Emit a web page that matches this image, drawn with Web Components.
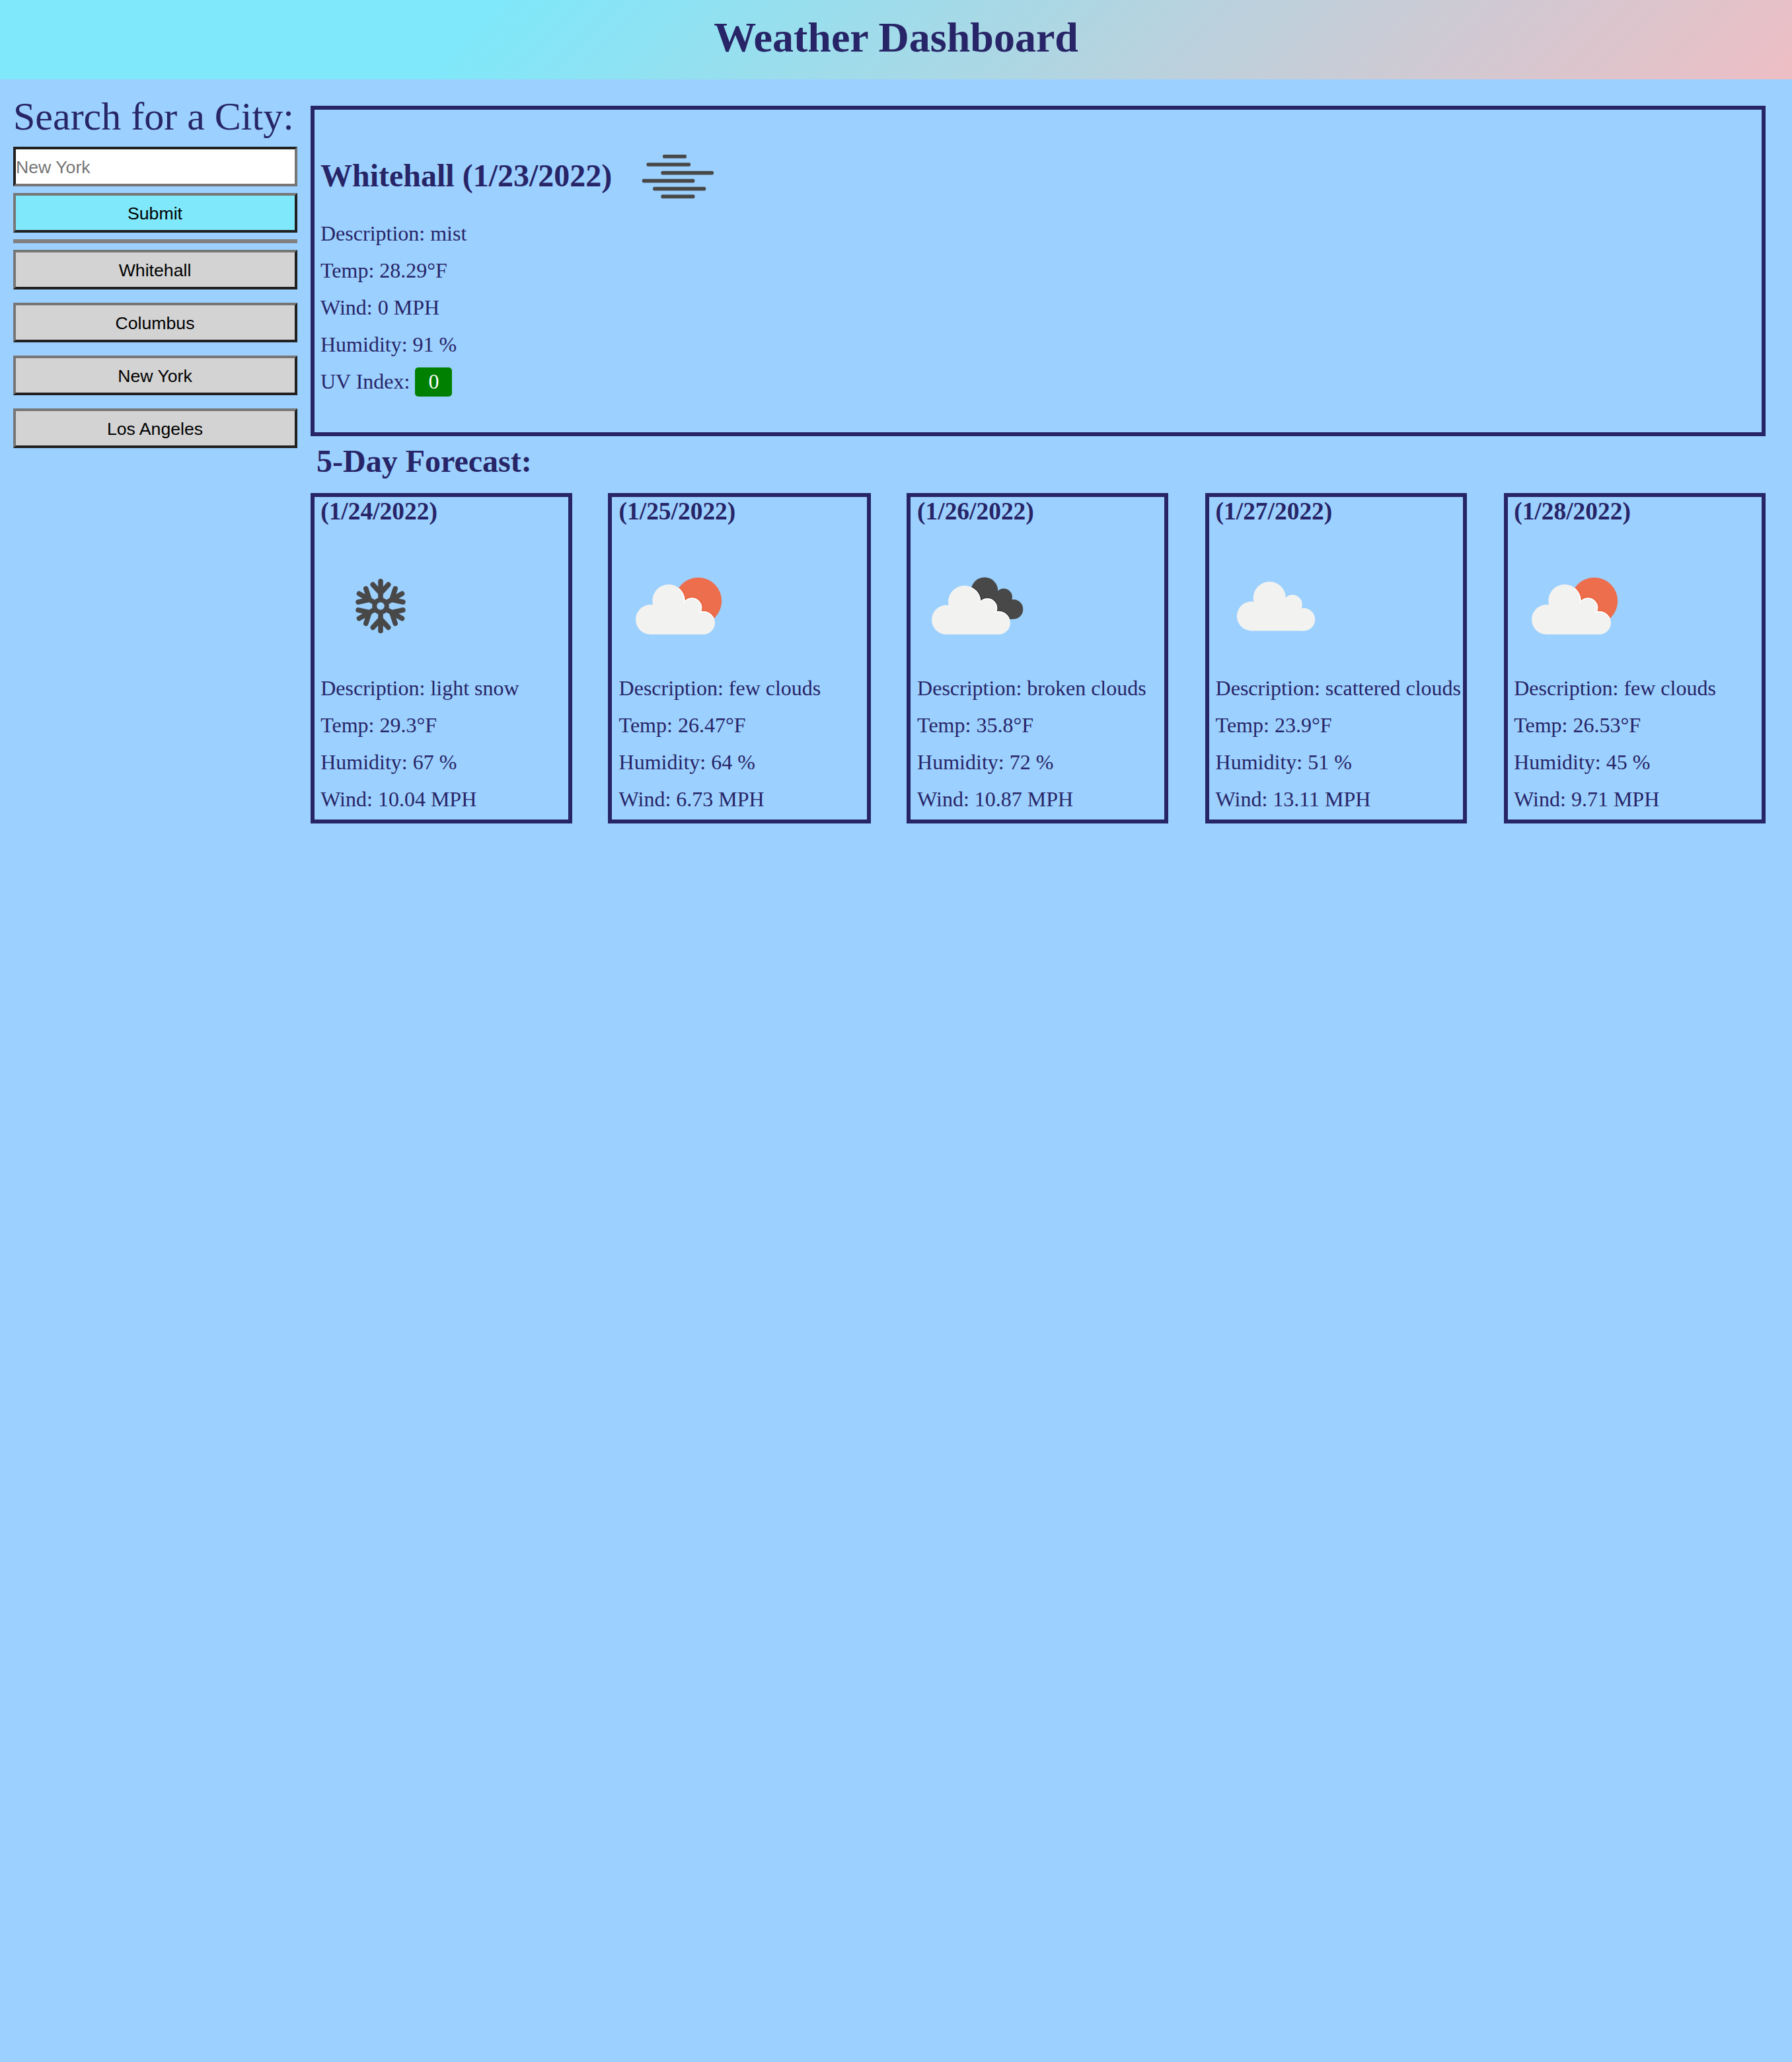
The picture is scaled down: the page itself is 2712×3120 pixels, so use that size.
<!DOCTYPE html>
<html lang="en">
<head>
<meta charset="utf-8">
<title>Weather Dashboard</title>
<style>
  html { background: #9cd0ff; }
  body { margin: 0; font-family: "Liberation Serif", "Times New Roman", serif; font-size: 32px; color: #272567; }
</style>
</head>
<body>
<weather-app></weather-app>
<script>
const make = (name, html, setup) => {
  const tpl = document.createElement('template');
  tpl.innerHTML = html;
  customElements.define(name, class extends HTMLElement {
    connectedCallback() {
      if (this.shadowRoot) return;
      const root = this.attachShadow({ mode: 'open' });
      root.append(tpl.content.cloneNode(true));
      if (setup) setup(this, root);
    }
  });
};

// A cloud is a list of [cx, cy, r] lobes (left, big, small, right) on a flat base.
const cloud = (lobes, fill, d = 0) => {
  const [l, b, s, r] = lobes;
  const base = l[1] + l[2] + d;
  return `<g fill="${fill}">` +
    lobes.map(([x, y, q]) => `<circle cx="${x}" cy="${y}" r="${q + d}"/>`).join('') +
    `<path d="M${l[0]} ${l[1]}L${b[0]} ${b[1]}L${s[0]} ${s[1]}L${r[0]} ${r[1]}V${base}H${l[0]}Z"/></g>`;
};
const layered = (lobes, clip, rim) =>
  `<g clip-path="url(#${clip})">${cloud(lobes, rim, 1.3)}</g>` + cloud(lobes, '#f2f2f0') +
  `<g clip-path="url(#${clip})">${cloud(lobes, '#fbffff')}${cloud(lobes, '#f2f2f0', -1.6)}</g>`;

const few = [[47.6,110.4,22.6],[75,82,24.7],[110.3,92.6,15],[127.4,115.4,17.6]];
const broken = [[43.2,110.8,22.2],[70.7,83.7,24.7],[105.3,93.3,15],[122.4,115.4,17.6]];
const scattered = [[53.1,105.3,22.2],[80.3,77.7,24.6],[115,87.7,14.7],[132,110.3,17.2]];
const sun = '<circle cx="119.7" cy="82.3" r="35.5"/>';
const darkCloud = '<circle cx="101" cy="66.8" r="20.3"/><circle cx="130" cy="76.6" r="13"/><circle cx="144.4" cy="94.9" r="14.9"/><path d="M101 66.8L130 76.6L144.4 94.9V109.8H100Z"/>';
const arm = '<path d="M0-12V-37.5M0-19.5L-11.7-32.4M0-19.5L11.7-32.4"/>';
const bars = [[67,36,59.7],[42.5,66.5,72],[64.4,79.6,84.6],[35.8,79.5,96.6],[52.2,80,108.6],[64.4,51,120.4]];

const icons = {
  snow: `<g transform="translate(89 90)" fill="none" stroke="#484848" stroke-width="7.6" stroke-linecap="round">
    <circle r="9.3" stroke-width="7"/>${[0,60,120,180,240,300].map(a => `<g transform="rotate(${a})">${arm}</g>`).join('')}</g>`,
  few: `<clipPath id="s">${sun}</clipPath><g fill="#ec6e4c">${sun}</g>` + layered(few, 's', '#ee5a30'),
  broken: `<clipPath id="d">${darkCloud}</clipPath><g fill="#484848">${darkCloud}</g>` + layered(broken, 'd', '#303032'),
  scattered: cloud(scattered, '#f2f2f0'),
  mist: '<g fill="#484848">' + bars.map(([x, w, y]) => `<rect x="${x}" y="${y - 2.8}" width="${w}" height="5.6" rx="2"/>`).join('') + '</g>'
};

make('weather-icon', `<style>
  :host { display: block; width: 180px; height: 180px; }
  svg { display: block; width: 100%; height: 100%; filter: blur(.6px); }
</style>`, (el, root) => {
  const box = el.getAttribute('box') || '0 0 180 180';
  root.innerHTML += `<svg viewBox="${box}" aria-hidden="true">${icons[el.getAttribute('kind')]}</svg>`;
});

make('app-header', `<style>
  :host { display: block; height: 120px; box-sizing: border-box; padding-top: 20px; text-align: center;
    background: linear-gradient(135deg, #7fe8fa 27%, #eebec4 100%); }
  h1 { margin: 0; font-size: 64px; line-height: 73px; }
</style><h1><slot></slot></h1>`);

make('city-button', `<style>
  :host { display: block; }
  button { display: block; width: 100%; height: 60px; box-sizing: border-box; margin: 0; padding: 12px 1px 10px 0;
    border: 4px solid; border-color: #767676 #212121 #212121 #767676; border-radius: 0;
    background: var(--fill, #d3d3d3); color: #000;
    font: 26.667px/30px "Liberation Sans", Arial, sans-serif; }
</style><button type="button"><slot></slot></button>`);

make('search-panel', `<style>
  :host { display: block; width: 430px; padding: 23px 0 0 20px; }
  label { display: block; font-size: 60px; line-height: 66px; white-space: nowrap; margin: 0 0 13px; }
  input { display: block; width: 430px; height: 60px; box-sizing: border-box; margin: 0 0 10px; padding: 2px 0 0;
    border: 4px solid; border-color: #212121 #767676 #767676 #212121; border-radius: 0; background: #fff;
    font: 26.667px/30px "Liberation Sans", Arial, sans-serif; }
  input::placeholder { color: #757575; opacity: 1; }
  .submit { --fill: #7fe8fa; }
  .rule { height: 6px; background: #808080; margin: 10px 0; }
  .history { display: flex; flex-direction: column; gap: 20px; }
</style>
<label for="city">Search for a City:</label>
<input id="city" type="text" placeholder="New York">
<city-button class="submit">Submit</city-button>
<div class="rule"></div>
<div class="history"><slot></slot></div>`);

make('current-weather', `<style>
  :host { display: block; height: 500px; box-sizing: border-box; border: 6px solid #272567; padding: 46px 10px 0 9px; }
  .top { display: flex; align-items: center; height: 110px; margin-bottom: 3px; }
  h2 { margin: 0 0 3px; width: 451px; font-size: 48px; line-height: 57px; white-space: nowrap; }
  weather-icon { height: 110px; }
  .facts { line-height: 56px; }
</style>
<div class="top"><h2><slot name="title"></slot></h2><weather-icon kind="mist" box="0 35 180 110"></weather-icon></div>
<div class="facts"><slot></slot></div>`);

make('weather-fact', `<style>:host { display: block; height: 56px; line-height: 56px; white-space: nowrap; }</style><slot></slot>`);

make('uv-badge', `<style>
  :host { display: inline; padding: 3px 20px 5px; border-radius: 5px; background: #008000; color: #fff; }
</style><slot></slot>`);

make('forecast-card', `<style>
  :host { display: block; width: var(--w, 396px); height: 500px; box-sizing: border-box; border: 6px solid #272567; }
  h3 { margin: 0 0 32px; font-size: 37.44px; line-height: 43px; padding-left: var(--inset, 9.2px); }
  weather-icon { margin: 0 0 6px 11px; }
  .facts { padding-left: var(--inset, 9.2px); }
</style>
<h3></h3><weather-icon></weather-icon>
<div class="facts"><weather-fact></weather-fact><weather-fact></weather-fact><weather-fact></weather-fact><weather-fact></weather-fact></div>`,
(el, root) => {
  const g = n => el.getAttribute(n);
  root.querySelector('h3').textContent = `(${g('date')})`;
  const icon = document.createElement('weather-icon');
  icon.setAttribute('kind', g('kind'));
  root.querySelector('weather-icon').replaceWith(icon);
  const lines = [`Description: ${g('text')}`, `Temp: ${g('temp')}°F`, `Humidity: ${g('humidity')} %`, `Wind: ${g('wind')} MPH`];
  root.querySelectorAll('weather-fact').forEach((f, i) => { f.textContent = lines[i]; });
});

make('five-day', `<style>
  :host { display: block; }
  h2 { margin: 9px 0 20px 9px; font-size: 48px; line-height: 57px; }
  .row { display: grid; grid-template-columns: 450px 452px 452px 452px 396px; }
</style><h2>5-Day Forecast:</h2><div class="row"><slot></slot></div>`);

make('weather-app', `<style>
  :host { display: block; min-height: 3120px; background: #9cd0ff; }
  .body { display: flex; gap: 20px; }
  main { width: 2202px; padding-top: 40px; }
</style>
<app-header>Weather Dashboard</app-header>
<div class="body">
  <search-panel>
    <city-button>Whitehall</city-button><city-button>Columbus</city-button>
    <city-button>New York</city-button><city-button>Los Angeles</city-button>
  </search-panel>
  <main>
    <current-weather>
      <span slot="title">Whitehall (1/23/2022)</span>
      <weather-fact>Description: mist</weather-fact>
      <weather-fact>Temp: 28.29°F</weather-fact>
      <weather-fact>Wind: 0 MPH</weather-fact>
      <weather-fact>Humidity: 91 %</weather-fact>
      <weather-fact>UV Index: <uv-badge>0</uv-badge></weather-fact>
    </current-weather>
    <five-day>
      <forecast-card date="1/24/2022" kind="snow" text="light snow" temp="29.3" humidity="67" wind="10.04"></forecast-card>
      <forecast-card style="--w:398px;--inset:10.6px" date="1/25/2022" kind="few" text="few clouds" temp="26.47" humidity="64" wind="6.73"></forecast-card>
      <forecast-card style="--inset:10.1px" date="1/26/2022" kind="broken" text="broken clouds" temp="35.8" humidity="72" wind="10.87"></forecast-card>
      <forecast-card style="--inset:9.6px" date="1/27/2022" kind="scattered" text="scattered clouds" temp="23.9" humidity="51" wind="13.11"></forecast-card>
      <forecast-card date="1/28/2022" kind="few" text="few clouds" temp="26.53" humidity="45" wind="9.71"></forecast-card>
    </five-day>
  </main>
</div>`);
</script>
</body>
</html>
